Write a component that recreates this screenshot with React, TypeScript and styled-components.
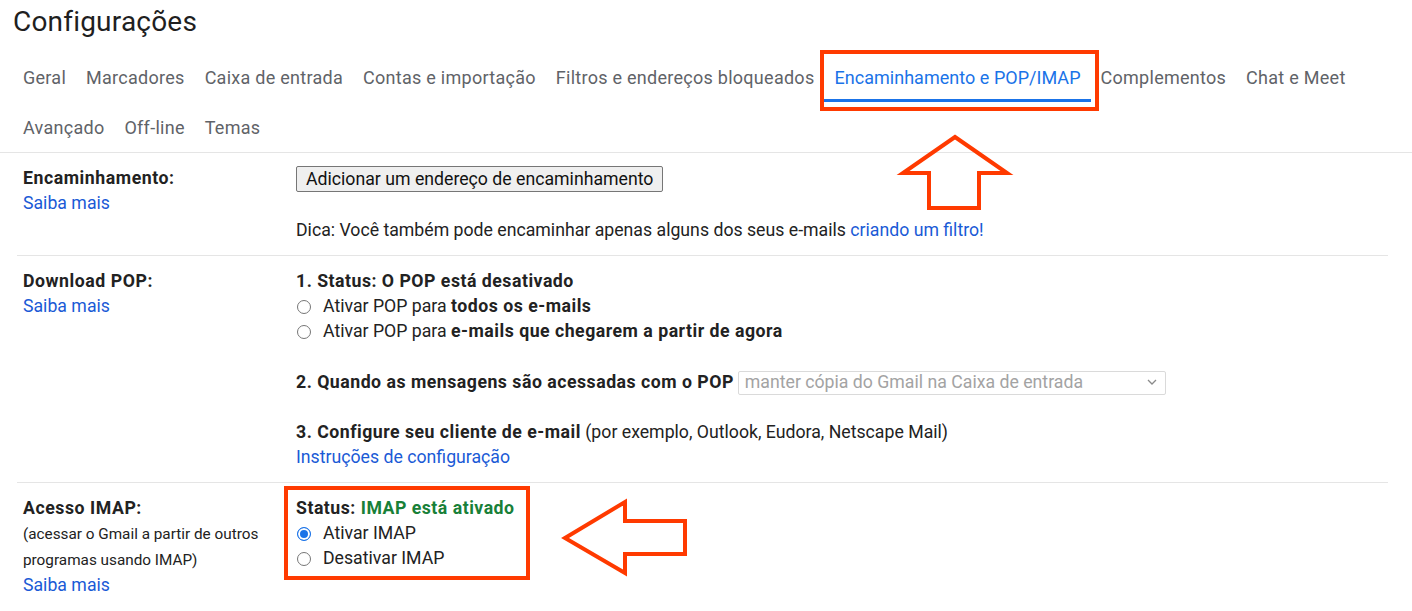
import React from 'react';
import styled, { createGlobalStyle, css } from 'styled-components';

const GlobalStyle = createGlobalStyle`
  html, body { margin: 0; padding: 0; background: #fff; }
  body { font-family: Roboto, "Liberation Sans", Arial, sans-serif; color: #222; }
  * { box-sizing: border-box; }
`;

const RED = '#ff3a00';

const Page = styled.div`
  position: relative;
  width: 1412px;
  height: 611px;
  overflow: hidden;
`;

const Title = styled.h1`
  margin: 0 0 8px 13px;
  height: 44px;
  line-height: 44px;
  font-size: 28px;
  letter-spacing: 0.2px;
  font-weight: 400;
  color: #1f1f1f;
`;

const TabBar = styled.nav`
  padding-left: 13px;
  border-bottom: 1px solid #e5e5e5;
`;

const TabRow = styled.div`
  display: flex;
  height: 50px;
`;

const Tab = styled.div<{ $active?: boolean }>`
  position: relative;
  display: flex;
  align-items: center;
  padding: 0 10px;
  font-size: 18px;
  letter-spacing: 0.27px;
  color: #5f6368;
  white-space: nowrap;
  ${(p) =>
    p.$active &&
    css`
      color: #1a73e8;
      letter-spacing: 0.03px;
      &::after {
        content: '';
        position: absolute;
        left: 0;
        right: 0;
        bottom: 0;
        height: 3px;
        background: #1a73e8;
      }
    `}
`;

const TabHighlight = styled.span`
  position: absolute;
  left: -4px;
  right: -8px;
  top: -2px;
  bottom: -9px;
  border: 4px solid ${RED};
  pointer-events: none;
`;

const Settings = styled.section`
  margin: 0 24px 0 17px;
`;

const Row = styled.div<{ $last?: boolean }>`
  display: grid;
  grid-template-columns: 279px 1fr;
  padding: 13px 0 12px;
  border-bottom: ${(p) => (p.$last ? 'none' : '1px solid #e5e5e5')};
  font-size: 17.7px;
  line-height: 25px;
`;

const LabelCell = styled.div`
  padding-left: 6px;
  display: flex;
  flex-direction: column;
  align-items: flex-start;
`;

const Label = styled.div`
  font-weight: 700;
  letter-spacing: 0.55px;
  color: #222;
`;

const Note = styled.div`
  font-size: 15.3px;
  line-height: 26px;
  color: #222;
`;

const Link = styled.a`
  color: #1a5ad6;
  text-decoration: none;
  cursor: pointer;
`;

const Content = styled.div`
  display: flex;
  flex-direction: column;
  align-items: flex-start;
`;

const Button = styled.button`
  margin-top: 0;
  height: 26px;
  padding: 0 9px;
  font-family: Roboto, "Liberation Sans", Arial, sans-serif;
  font-size: 17.7px;
  color: #111;
  background: #efefef;
  border: 1px solid #767676;
  border-radius: 2px;
`;

const Line = styled.div<{ $gap?: number }>`
  margin-top: ${(p) => p.$gap ?? 0}px;
  display: flex;
  align-items: center;
  white-space: nowrap;
`;

const Strong = styled.b<{ $green?: boolean }>`
  font-weight: 700;
  letter-spacing: 0.5px;
  color: ${(p) => (p.$green ? '#188038' : '#222')};
`;

const Radio = styled.span<{ $checked?: boolean }>`
  display: inline-block;
  width: 14px;
  height: 14px;
  margin: 0 12px 0 1px;
  border-radius: 50%;
  border: 1px solid ${(p) => (p.$checked ? '#1a73e8' : '#767676')};
  background: ${(p) => (p.$checked ? '#1a73e8' : '#fff')};
  box-shadow: ${(p) => (p.$checked ? 'inset 0 0 0 2px #fff' : 'none')};
  flex: none;
`;

const Select = styled.div`
  margin-left: 4px;
  width: 428px;
  height: 24px;
  display: flex;
  align-items: center;
  justify-content: space-between;
  padding: 0 8px 0 6px;
  border: 1px solid #dadada;
  border-radius: 2px;
  color: #a3a3a3;
  font-size: 17.7px;
`;

const ImapBlock = styled.div`
  position: relative;
`;

const ImapHighlight = styled.span`
  position: absolute;
  left: -12px;
  top: -10px;
  width: 246px;
  height: 94px;
  border: 4px solid ${RED};
  pointer-events: none;
`;

const ArrowSvg = styled.svg<{ $left: number; $top: number }>`
  position: absolute;
  left: ${(p) => p.$left}px;
  top: ${(p) => p.$top}px;
  overflow: visible;
`;

const Chevron = () => (
  <svg width="10" height="7" viewBox="0 0 10 7">
    <path d="M1 1l4 4 4-4" fill="none" stroke="#8a8a8a" strokeWidth="1.3" />
  </svg>
);

const tabsRow1 = [
  'Geral',
  'Marcadores',
  'Caixa de entrada',
  'Contas e importação',
  'Filtros e endereços bloqueados',
  'Encaminhamento e POP/IMAP',
  'Complementos',
  'Chat e Meet',
];
const tabsRow2 = ['Avançado', 'Off-line', 'Temas'];
const ACTIVE = 'Encaminhamento e POP/IMAP';

export default function App() {
  return (
    <Page>
      <GlobalStyle />
      <Title>Configurações</Title>
      <TabBar>
        <TabRow>
          {tabsRow1.map((t) => (
            <Tab key={t} $active={t === ACTIVE}>
              {t}
              {t === ACTIVE && <TabHighlight />}
            </Tab>
          ))}
        </TabRow>
        <TabRow>
          {tabsRow2.map((t) => (
            <Tab key={t}>{t}</Tab>
          ))}
        </TabRow>
      </TabBar>

      <Settings>
        <Row>
          <LabelCell>
            <Label>Encaminhamento:</Label>
            <Link>Saiba mais</Link>
          </LabelCell>
          <Content>
            <Button>Adicionar um endereço de encaminhamento</Button>
            <Line $gap={26}>
              Dica: Você também pode encaminhar apenas alguns dos seus e-mails&nbsp;
              <Link>criando um filtro!</Link>
            </Line>
          </Content>
        </Row>

        <Row>
          <LabelCell>
            <Label>Download POP:</Label>
            <Link>Saiba mais</Link>
          </LabelCell>
          <Content>
            <Line>
              <Strong>1. Status: O POP está desativado</Strong>
            </Line>
            <Line>
              <Radio />
              Ativar POP para&nbsp;<Strong>todos os e-mails</Strong>
            </Line>
            <Line>
              <Radio />
              Ativar POP para&nbsp;<Strong>e-mails que chegarem a partir de agora</Strong>
            </Line>
            <Line $gap={26}>
              <Strong>2. Quando as mensagens são acessadas com o POP</Strong>
              <Select>
                manter cópia do Gmail na Caixa de entrada
                <Chevron />
              </Select>
            </Line>
            <Line $gap={25}>
              <Strong>3. Configure seu cliente de e-mail</Strong>&nbsp;(por exemplo, Outlook, Eudora, Netscape Mail)
            </Line>
            <Link>Instruções de configuração</Link>
          </Content>
        </Row>

        <Row $last>
          <LabelCell>
            <Label>Acesso IMAP:</Label>
            <Note>(acessar o Gmail a partir de outros</Note>
            <Note>programas usando IMAP)</Note>
            <Link>Saiba mais</Link>
          </LabelCell>
          <Content>
            <ImapBlock>
              <Line>
                <Strong>Status:&nbsp;</Strong>
                <Strong $green>IMAP está ativado</Strong>
              </Line>
              <Line>
                <Radio $checked />
                Ativar IMAP
              </Line>
              <Line>
                <Radio />
                Desativar IMAP
              </Line>
              <ImapHighlight />
            </ImapBlock>
          </Content>
        </Row>
      </Settings>

      <ArrowSvg $left={895} $top={130} width="120" height="85" viewBox="0 0 120 85">
        <polygon
          points="60,7 112,43 84,43 84,78 34,78 34,43 8,43"
          fill="none"
          stroke={RED}
          strokeWidth="4"
          strokeLinejoin="miter"
        />
      </ArrowSvg>
      <ArrowSvg $left={555} $top={492} width="140" height="90" viewBox="0 0 140 90">
        <polygon
          points="10,46 70,10 70,29 130,29 130,62 70,62 70,81"
          fill="none"
          stroke={RED}
          strokeWidth="4"
          strokeLinejoin="miter"
        />
      </ArrowSvg>
    </Page>
  );
}
